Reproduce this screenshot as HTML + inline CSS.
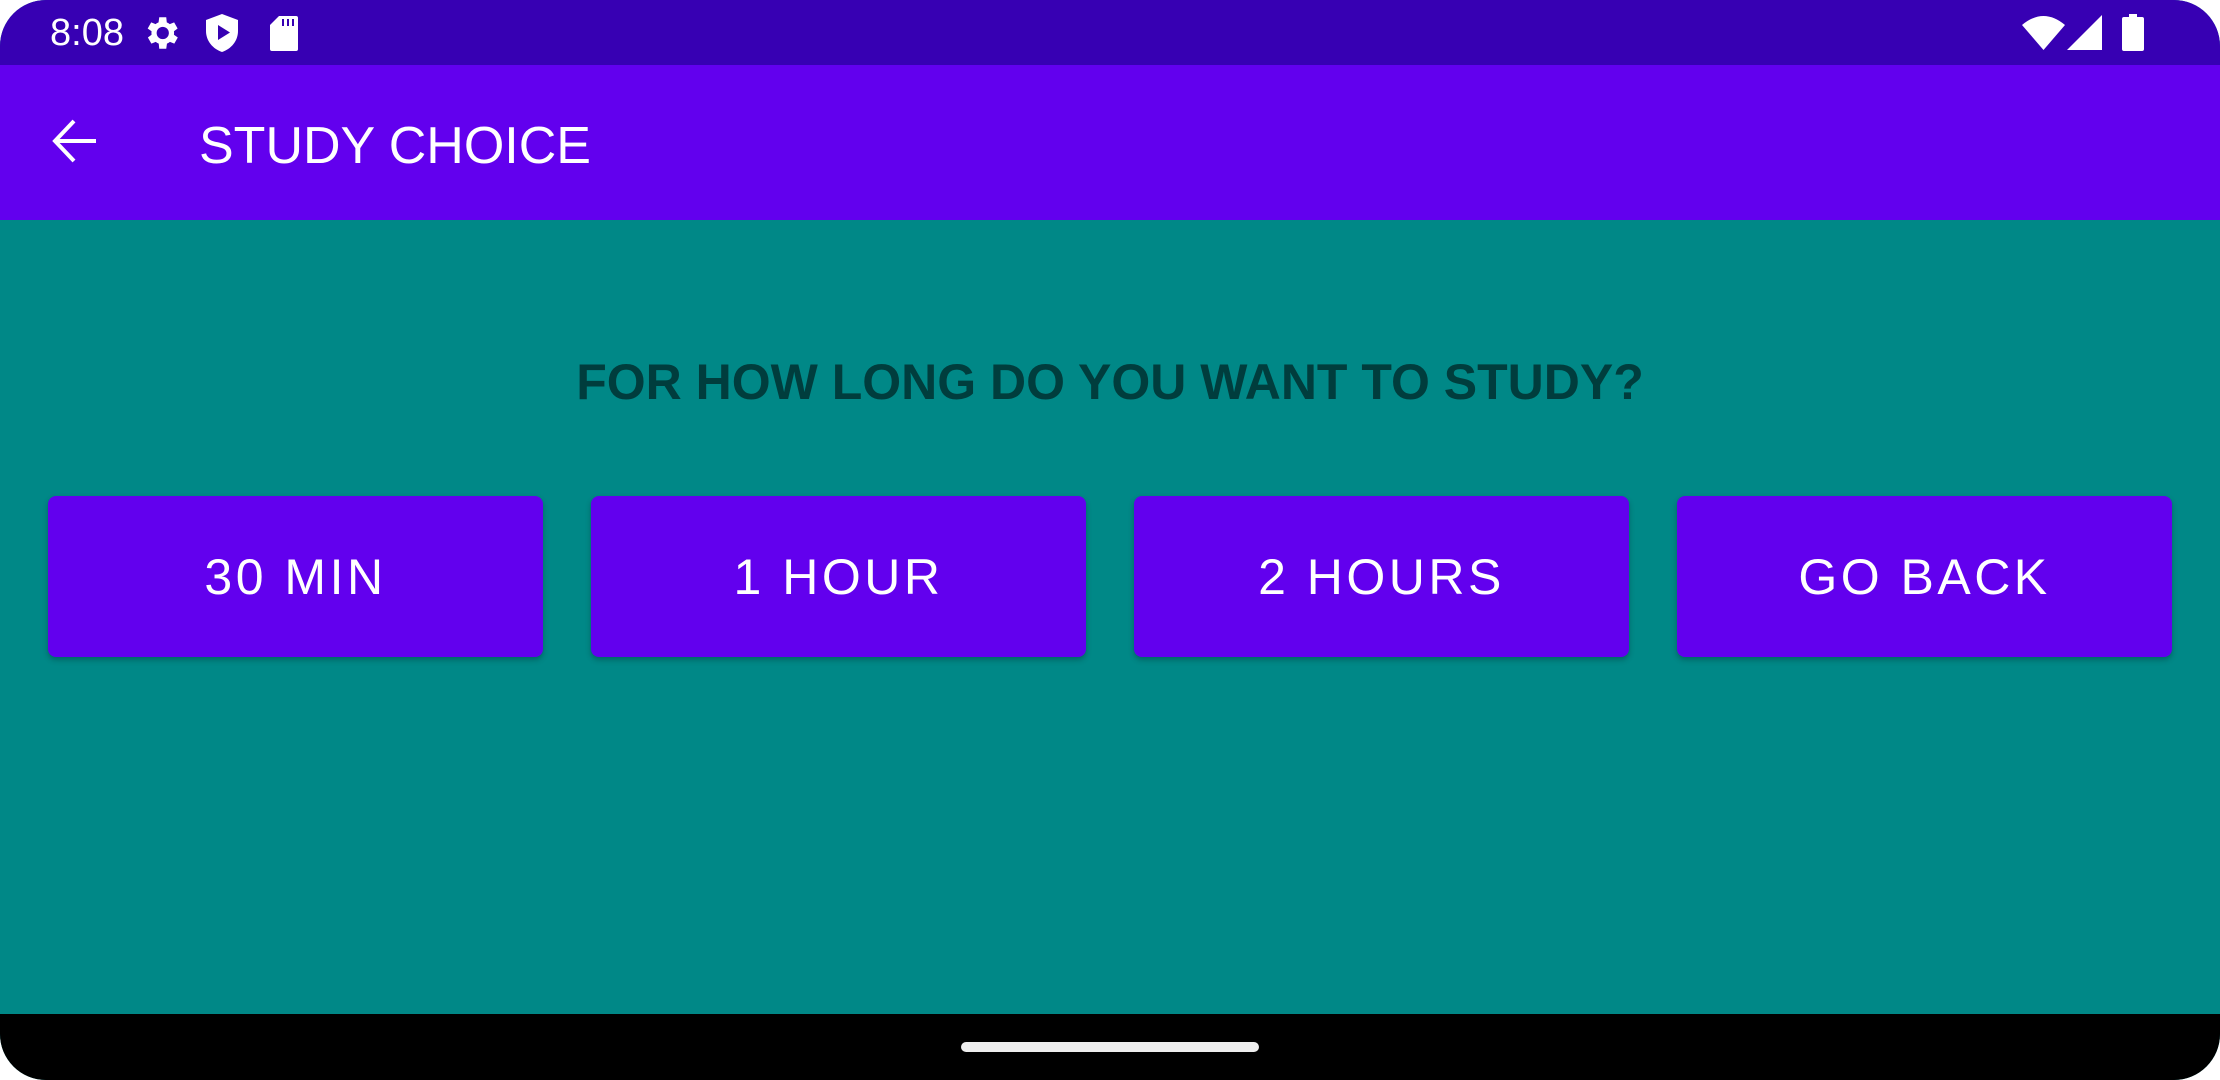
<!DOCTYPE html>
<html><head><meta charset="utf-8"><style>
*{margin:0;padding:0;box-sizing:border-box}
body{width:2220px;height:1080px;background:#fff;overflow:hidden;font-family:"Liberation Sans",sans-serif}
#s{position:absolute;left:0;top:0;width:2220px;height:1080px;border-radius:46px;overflow:hidden;background:#008887}
#sb{position:absolute;left:0;top:0;width:100%;height:65px;background:#3700B3;color:#fff}
#ab{position:absolute;left:0;top:65px;width:100%;height:155px;background:#6200EE;color:#fff}
#nav{position:absolute;left:0;top:1014px;width:100%;height:66px;background:#000}
.btn{position:absolute;top:496px;width:495px;height:161px;background:#6200EE;border-radius:8px;color:#fff;font-size:50px;letter-spacing:3.5px;display:flex;align-items:center;justify-content:center;box-shadow:0 3px 6px rgba(0,0,0,.25)}
</style></head><body><div id="s">
<div id="sb">
<div style="position:absolute;left:50px;top:12px;font-size:38px">8:08</div>
<svg style="position:absolute;left:140px;top:12px" width="42" height="42" viewBox="0 0 24 24"><path fill="#fff" d="M19.4 13a7.5 7.5 0 0 0 0-2l2.1-1.6-2-3.5-2.5 1a7 7 0 0 0-1.7-1L15 3h-4l-.4 2.9a7 7 0 0 0-1.7 1l-2.5-1-2 3.5L6.6 11a7.5 7.5 0 0 0 0 2l-2.1 1.6 2 3.5 2.5-1a7 7 0 0 0 1.7 1L11 21h4l.4-2.9a7 7 0 0 0 1.7-1l2.5 1 2-3.5zM13 15.5a3.5 3.5 0 1 1 0-7 3.5 3.5 0 0 1 0 7z"/></svg>
<svg style="position:absolute;left:206px;top:14px" width="32" height="38" viewBox="0 0 32 38"><path fill="#fff" d="M16 0L0 6v11c0 10 7 18 16 21 9-3 16-11 16-21V6z"/><path fill="#3700B3" d="M12 11v15l12-7.5z"/></svg>
<svg style="position:absolute;left:270px;top:16px" width="28" height="35" viewBox="0 0 28 35"><path fill="#fff" d="M9 0h17a2 2 0 0 1 2 2v31a2 2 0 0 1-2 2H2a2 2 0 0 1-2-2V9z"/><path fill="#3700B3" d="M12 3h2v7h-2zM17 3h2v7h-2zM22 3h2v7h-2z"/></svg>
<svg style="position:absolute;left:2022px;top:15px" width="43" height="35" viewBox="0 0 43 35"><path fill="#fff" d="M0 10Q21.5-8 43 10L21.5 35z"/></svg>
<svg style="position:absolute;left:2067px;top:15px" width="35" height="35" viewBox="0 0 35 35"><path fill="#fff" d="M35 0V35H0z"/></svg>
<svg style="position:absolute;left:2122px;top:14px" width="22" height="37" viewBox="0 0 22 37"><path fill="#fff" d="M7 0h8v3h5a2 2 0 0 1 2 2v30a2 2 0 0 1-2 2H2a2 2 0 0 1-2-2V5a2 2 0 0 1 2-2h5z"/></svg>
</div>
<div id="ab">
<svg style="position:absolute;left:52px;top:53px" width="46" height="46" viewBox="0 0 46 46"><path d="M44 23H4M22 3L3 23l19 20" stroke="#fff" stroke-width="4" fill="none"/></svg>
<div style="position:absolute;left:199px;top:51px;font-size:52px;letter-spacing:0">STUDY CHOICE</div>
</div>
<div style="position:absolute;left:0;width:100%;top:352px;text-align:center;font-size:50px;font-weight:bold;color:#003d3d;letter-spacing:0;line-height:60px">FOR HOW LONG DO YOU WANT TO STUDY?</div>
<div class="btn" style="left:48px">30 MIN</div>
<div class="btn" style="left:591px">1 HOUR</div>
<div class="btn" style="left:1134px">2 HOURS</div>
<div class="btn" style="left:1677px">GO BACK</div>
<div id="nav"><div style="position:absolute;left:961px;top:28px;width:298px;height:10px;border-radius:5px;background:#eee"></div></div>
</div></body></html>
